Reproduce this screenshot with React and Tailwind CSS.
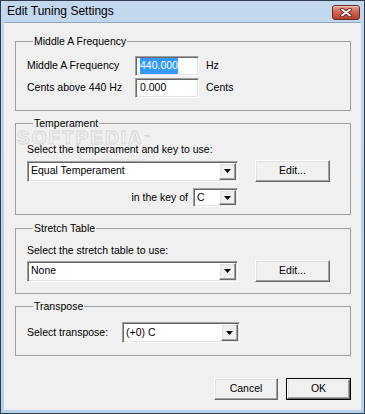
import React from 'react';

const sunken =
  'border border-t-[#a0a0a0] border-l-[#a0a0a0] border-r-white border-b-white shadow-[inset_1px_1px_0_#696969,inset_-1px_-1px_0_#e3e3e3]';
const raised =
  'border border-t-white border-l-white border-r-[#696969] border-b-[#696969] shadow-[inset_-1px_-1px_0_#a0a0a0,inset_1px_1px_0_#e3e3e3] bg-[#f0f0f0]';

function Combo({ value, width, height = 21 }) {
  return (
    <div className={`flex bg-white ${sunken}`} style={{ width, height }}>
      <div className="flex-1 flex items-center pl-[3px] text-black truncate">{value}</div>
      <div className={`w-[17px] m-[1px] flex items-center justify-center ${raised}`}>
        <svg width="7" height="4" viewBox="0 0 7 4">
          <path d="M0 0h7L3.5 4z" fill="#000" />
        </svg>
      </div>
    </div>
  );
}

function Button({ children, width, isDefault }) {
  return (
    <div className={isDefault ? 'border border-black' : ''}>
      <div className={`flex items-center justify-center text-black ${raised} ${isDefault ? 'h-[20px]' : 'h-[22px]'}`} style={{ width: isDefault ? width - 2 : width }}>
        {children}
      </div>
    </div>
  );
}

function Group({ title, children, className }) {
  return (
    <fieldset className={`border border-[#a0a0a0] px-[11px] m-0 ${className}`}>
      <legend className="ml-[6px] px-[1px] leading-[13px] text-black">{title}</legend>
      {children}
    </fieldset>
  );
}

export default function App() {
  return (
    <div className="w-[365px] h-[414px] bg-gradient-to-b from-[#c3d7ed] to-[#b7cfe8] border border-[#2f3d4e] flex flex-col font-['Liberation_Sans',Arial,sans-serif] text-[10.5px] overflow-hidden">
      {/* Title bar */}
      <div className="h-[21px] flex items-start">
        <div className="flex-1 pl-[6px] pt-[3px] text-[12px] leading-[15px] text-black">Edit Tuning Settings</div>
        <div className="mt-[4px] mr-[4px] w-[28px] h-[15px] rounded-[3px] border border-[#6b2a24] bg-gradient-to-b from-[#e19f93] via-[#cf5f4e] to-[#b9402f] flex items-center justify-center shadow-[inset_0_1px_0_#f1c3ba]">
          <svg width="12" height="9" viewBox="0 0 12 9">
            <path d="M2 1.5l8 6M10 1.5l-8 6" stroke="#5c1f18" strokeWidth="3.6" strokeLinecap="round" />
            <path d="M2 1.5l8 6M10 1.5l-8 6" stroke="#fff" strokeWidth="2" strokeLinecap="round" />
          </svg>
        </div>
      </div>

      {/* Client area */}
      <div className="relative flex-1 mx-[3px] mb-[3px] bg-[#f0f0f0] border-t border-[#8ea6c0] pl-[11px] pr-[10px] pt-[12px] flex flex-col">
        {/* watermark */}
        <div className="absolute left-[13px] top-[105px] leading-[20px] text-[19px] font-bold tracking-[2px] text-[#f6f6f6] [-webkit-text-stroke:1px_#d8d8d8] pointer-events-none">
          SOFTPEDIA<span className="text-[7px] align-top [-webkit-text-stroke:0] text-[#d0d0d0]">™</span>
        </div>
        <div className="absolute left-[74px] top-[134px] leading-[8px] text-[8px] text-[#e0e0e0] pointer-events-none">www.softpedia.com</div>

        <Group title="Middle A Frequency" className="pb-[12px]">
          <div className="pt-[8px] flex flex-col gap-[2px]">
            <div className="flex items-center">
              <div className="w-[108px]">Middle A Frequency</div>
              <div className={`w-[64px] h-[20px] bg-white flex items-center pl-[4px] ${sunken}`}>
                <span className="bg-[#3399ff] text-white">440.000</span>
              </div>
              <div className="ml-[7px]">Hz</div>
            </div>
            <div className="flex items-center">
              <div className="w-[108px]">Cents above 440 Hz</div>
              <div className={`w-[64px] h-[20px] bg-white flex items-center pl-[4px] ${sunken}`}>0.000</div>
              <div className="ml-[7px]">Cents</div>
            </div>
          </div>
        </Group>

        <Group title="Temperament" className="mt-[6px] pb-[7px]">
          <div className="pt-[13px] leading-[13px] relative">Select the temperament and key to use:</div>
          <div className="mt-[4px] flex items-center gap-[17px] relative">
            <Combo value="Equal Temperament" width={211} />
            <Button width={75}>Edit...</Button>
          </div>
          <div className="mt-[6px] w-[211px] flex items-center justify-end gap-[5px]">
            <span>in the key of</span>
            <Combo value="C" width={45} height={19} />
          </div>
        </Group>

        <Group title="Stretch Table" className="mt-[7px] pb-[11px]">
          <div className="pt-[9px] leading-[13px]">Select the stretch table to use:</div>
          <div className="mt-[3px] flex items-center gap-[17px]">
            <Combo value="None" width={211} />
            <Button width={75}>Edit...</Button>
          </div>
        </Group>

        <Group title="Transpose" className="mt-[6px] pb-[12px]">
          <div className="pt-[9px] flex items-center">
            <div className="w-[95px]">Select transpose:</div>
            <Combo value="(+0) C" width={118} />
          </div>
        </Group>

        <div className="mt-[22px] flex justify-end gap-[8px]">
          <Button width={64}>Cancel</Button>
          <Button width={65} isDefault>OK</Button>
        </div>
      </div>
    </div>
  );
}
